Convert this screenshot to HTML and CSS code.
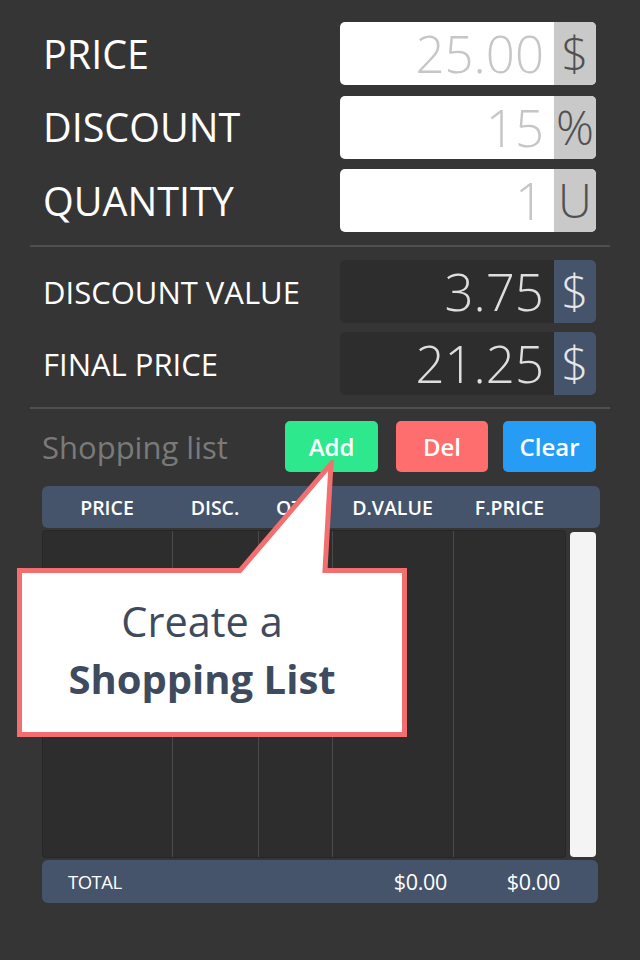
FILE: index.html
```html
<!DOCTYPE html>
<html>
<head>
<meta charset="utf-8">
<link rel="stylesheet" href="styles.css">
</head>
<body>
<div class="app">
  <div class="inputs">
    <div class="row">
      <span class="label label-big">PRICE</span>
      <div class="field field-input"><span class="val">25.00</span><span class="unit">$</span></div>
    </div>
    <div class="row">
      <span class="label label-big">DISCOUNT</span>
      <div class="field field-input"><span class="val">15</span><span class="unit">%</span></div>
    </div>
    <div class="row">
      <span class="label label-big">QUANTITY</span>
      <div class="field field-input"><span class="val">1</span><span class="unit">U</span></div>
    </div>
  </div>
  <div class="sep"></div>
  <div class="results">
    <div class="row">
      <span class="label label-mid">DISCOUNT VALUE</span>
      <div class="field field-result"><span class="val">3.75</span><span class="unit">$</span></div>
    </div>
    <div class="row">
      <span class="label label-mid">FINAL PRICE</span>
      <div class="field field-result"><span class="val">21.25</span><span class="unit">$</span></div>
    </div>
  </div>
  <div class="sep sep-2"></div>
  <div class="list-bar">
    <span class="list-title">Shopping list</span>
    <div class="buttons">
      <button class="btn btn-add">Add</button>
      <button class="btn btn-del">Del</button>
      <button class="btn btn-clear">Clear</button>
    </div>
  </div>
  <div class="table">
    <div class="thead cols">
      <span>PRICE</span><span>DISC.</span><span>QTY</span><span>D.VALUE</span><span>F.PRICE</span>
    </div>
    <div class="tbody-wrap">
      <div class="tbody cols">
        <div class="col"></div><div class="col"></div><div class="col"></div><div class="col"></div><div class="col"></div>
      </div>
      <div class="scrollbar"></div>
    </div>
    <div class="tfoot cols">
      <span class="total-label">TOTAL</span><span></span><span></span><span class="num">$0.00</span><span class="num">$0.00</span>
    </div>
  </div>

  <div class="callout">
    <svg class="callout-shape" width="392" height="280" viewBox="0 0 392 280">
      <path d="M2.5 110.5 L223 110.5 L314 4 L308 110.5 L387.5 110.5 L387.5 274.5 L2.5 274.5 Z" fill="#ffffff" stroke="#f36e6e" stroke-width="5" stroke-linejoin="miter"/>
    </svg>
    <div class="callout-text">
      <div class="c-line1">Create a</div>
      <div class="c-line2">Shopping List</div>
    </div>
  </div>
</div>
</body>
</html>
```

FILE: styles.css
```css
* { box-sizing: border-box; }
html, body {
  margin: 0;
  padding: 0;
  background: #353535;
}
body {
  width: 640px;
  height: 960px;
  overflow: hidden;
  font-family: "Open Sans", "Noto Sans", sans-serif;
}
.app {
  position: relative;
  padding: 22px 30px 0 30px;
}
.inputs, .results {
  display: flex;
  flex-direction: column;
  padding: 0 14px 0 13px;
}
.inputs { gap: 10.5px; }
.results { gap: 9px; margin-top: 13px; }
.row {
  display: flex;
  align-items: center;
  justify-content: space-between;
  height: 63px;
}
.label {
  color: #ffffff;
  font-weight: 400;
  white-space: nowrap;
}
.label-big { font-size: 39.5px; }
.label-mid { font-size: 31px; }
.field {
  width: 256px;
  height: 63px;
  display: flex;
  border-radius: 5px;
}
.val {
  flex: 1;
  display: flex;
  align-items: center;
  justify-content: flex-end;
  padding-right: 10px;
  font-weight: 300;
  font-size: 51px;
  line-height: 1;
  border-radius: 5px 0 0 5px;
}
.unit {
  width: 42px;
  display: flex;
  align-items: center;
  justify-content: center;
  font-weight: 300;
  font-size: 47px;
  line-height: 1;
  border-radius: 0 5px 5px 0;
}
.field-input { background: #ffffff; }
.field-input .val { color: #c6c6c6; }
.field-input .unit { background: #c9c9c9; color: #505050; }
.field-result { background: #2d2d2d; }
.field-result .val { color: #dedede; }
.field-result .unit { background: #45546a; color: #e6e6e6; }

.sep {
  height: 2px;
  background: #4f4f4f;
  margin-top: 13px;
}
.sep-2 { margin-top: 12px; }

.list-bar {
  display: flex;
  align-items: center;
  justify-content: space-between;
  margin-top: 12px;
  height: 51px;
  padding: 0 14px 0 12px;
}
.list-title {
  color: #7a7a7a;
  font-size: 31px;
  font-weight: 400;
}
.buttons {
  display: flex;
  gap: 18px;
}
.btn {
  width: 93px;
  height: 51px;
  border: none;
  border-radius: 5px;
  color: #ffffff;
  font-family: "Open Sans", "Noto Sans", sans-serif;
  font-weight: 600;
  font-size: 24px;
  padding: 0;
}
.btn-add { background: #2de88c; }
.btn-del { background: #ff6e6e; width: 92px; }
.btn-clear { background: #279cf5; margin-left: -3px; }

.table {
  margin-top: 14px;
  padding: 0 10px 0 12px;
}
.cols {
  display: grid;
  grid-template-columns: 130px 86px 74px 121px 113px;
}
.thead {
  height: 42px;
  background: #45546a;
  border-radius: 6px;
  align-items: center;
  color: #ffffff;
  font-weight: 600;
  font-size: 19.5px;
  text-align: center;
}
.tbody-wrap {
  display: flex;
  gap: 4px;
  margin-top: 2px;
  height: 328px;
}
.tbody {
  width: 524px;
  height: 328px;
  background: #2d2d2d;
  border: 1px solid #262626;
  border-radius: 4px;
}
.tbody .col { border-right: 1px solid #4a4a4a; }
.tbody .col:last-child { border-right: none; }
.scrollbar {
  width: 26px;
  height: 325px;
  margin-top: 2px;
  background: #f4f4f4;
  border-radius: 4px;
}
.tfoot {
  width: 556px;
  height: 43px;
  margin-top: 2px;
  background: #45546a;
  border-radius: 6px;
  align-items: center;
  color: #ffffff;
}
.total-label {
  font-size: 18.5px;
  padding-left: 26px;
  letter-spacing: -0.5px;
}
.tfoot .num {
  text-align: right;
  padding-right: 6px;
  font-size: 21.5px;
  letter-spacing: -0.3px;
}

.callout {
  position: absolute;
  left: 17px;
  top: 460px;
  width: 392px;
  height: 280px;
}
.callout-shape {
  position: absolute;
  left: 0;
  top: 0;
  display: block;
}
.callout-text {
  position: absolute;
  left: 0;
  top: 133px;
  width: 370px;
  text-align: center;
  color: #3e4b5e;
  font-size: 40px;
  line-height: 57px;
}
.c-line1 { font-weight: 400; font-size: 41.5px; }
.c-line2 { font-weight: 700; }
```
